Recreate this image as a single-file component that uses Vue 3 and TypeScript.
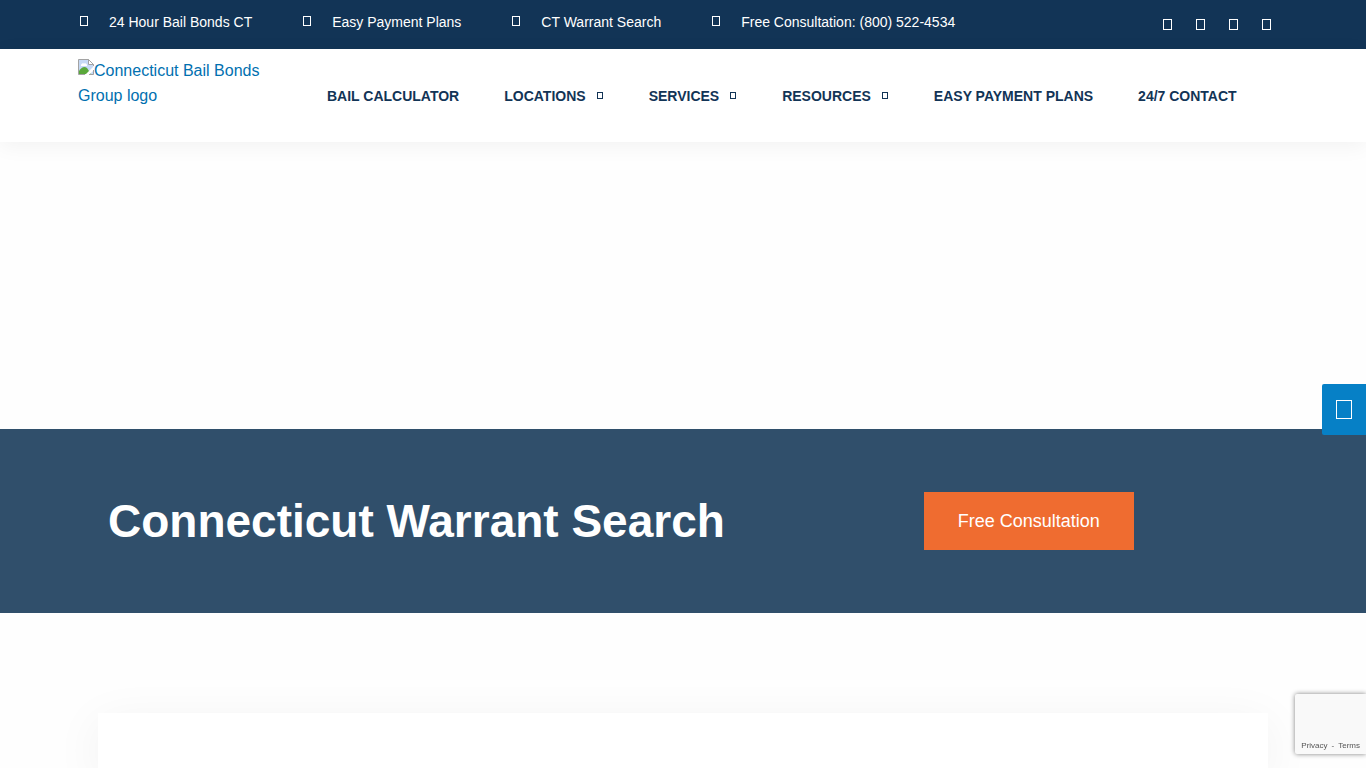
<script setup lang="ts">
interface NavItem {
  label: string
  menu: boolean
}

const contacts: string[] = [
  '24 Hour Bail Bonds CT',
  'Easy Payment Plans',
  'CT Warrant Search',
  'Free Consultation: (800) 522-4534',
]

const socials: string[] = ['Facebook', 'Twitter', 'YouTube', 'LinkedIn']

const nav: NavItem[] = [
  { label: 'BAIL CALCULATOR', menu: false },
  { label: 'LOCATIONS', menu: true },
  { label: 'SERVICES', menu: true },
  { label: 'RESOURCES', menu: true },
  { label: 'EASY PAYMENT PLANS', menu: false },
  { label: '24/7 CONTACT', menu: false },
]
</script>

<template>
  <div class="page">
    <div class="topbar">
      <ul class="contacts">
        <li v-for="item in contacts" :key="item">
          <a href="#">
            <svg class="contact-icon" width="8" height="11" viewBox="0 0 8 11" aria-hidden="true">
              <rect x="0.5" y="0.5" width="7" height="9" />
            </svg>
            <span>{{ item }}</span>
          </a>
        </li>
      </ul>
      <div class="socials">
        <a v-for="name in socials" :key="name" href="#" :aria-label="name">
          <svg width="10" height="12" viewBox="0 0 10 12" aria-hidden="true">
            <rect x="0.5" y="0.5" width="8" height="10" />
          </svg>
        </a>
      </div>
    </div>

    <header class="header">
      <a class="logo" href="#">
        <svg class="broken" width="16" height="17" viewBox="0 0 16 17" aria-hidden="true">
          <path d="M0.5 15.5V0.5H10.5L15.5 5.5V15.5Z" fill="#c6d9f5" />
          <path d="M3 6a2 2 0 0 1 3-1.500a2 2 0 0 1 3 1.500v1H3Z" fill="#fff" />
          <path d="M1 15V12Q5 6 9 9L13 15Z" fill="#5aa83a" />
          <path d="M7 16L16 7V11L11 16Z" fill="#fff" />
          <path d="M7 15.500H0.500V0.500H10.500L15.500 5.500V7M15.500 11V15.500H11" fill="none" stroke="#a3a3a3" />
          <path d="M10.500 0.500V5.500H15.500Z" fill="#fff" stroke="#a3a3a3" />
        </svg>Connecticut Bail Bonds Group logo
      </a>
      <nav class="nav" aria-label="Main">
        <a v-for="item in nav" :key="item.label" href="#">
          {{ item.label }}
          <svg v-if="item.menu" width="7" height="8" viewBox="0 0 7 8" aria-hidden="true">
            <rect x="0.5" y="0.5" width="5" height="6" />
          </svg>
        </a>
      </nav>
    </header>

    <main>
      <section class="banner">
        <h1>Connecticut Warrant Search</h1>
        <div class="action">
          <a class="cta" href="#">Free Consultation</a>
        </div>
      </section>
      <section class="card"></section>
    </main>

    <button class="side-button" type="button" aria-label="Open accessibility toolbar">
      <svg width="16" height="19" viewBox="0 0 16 19" aria-hidden="true">
        <rect x="0.5" y="0.5" width="15" height="18" />
      </svg>
    </button>

    <aside class="captcha">
      <a href="#">Privacy</a><span>-</span><a href="#">Terms</a>
    </aside>
  </div>
</template>

<style>
body {
  margin: 0;
  overflow: hidden;
  background: #fefefe;
}
</style>

<style scoped>
.page {
  height: 100vh;
  overflow: hidden;
  display: flex;
  flex-direction: column;
  font-family: "Liberation Sans", Arial, sans-serif;
}

a {
  color: inherit;
  text-decoration: none;
}

svg rect {
  fill: none;
  stroke: currentColor;
}

.topbar {
  flex: none;
  display: flex;
  justify-content: space-between;
  align-items: flex-start;
  padding: 12px 94px 12px 80px;
  background: #123456;
  color: #fff;
}

.contacts {
  display: flex;
  gap: 51px;
  margin: 0;
  padding: 0;
  list-style: none;
  font-size: 14px;
  line-height: 20px;
  white-space: nowrap;
}

.contacts a {
  display: flex;
  align-items: flex-start;
  gap: 21px;
}

.contact-icon {
  margin-top: 4px;
}

.socials {
  display: flex;
  align-items: center;
  gap: 23px;
  height: 25px;
}

.socials svg {
  display: block;
}

.header {
  flex: none;
  display: flex;
  align-items: flex-start;
  padding: 9px 78px;
  background: #fff;
  box-shadow: 0 4px 20px rgba(0, 0, 0, 0.05);
}

.logo {
  width: 204px;
  height: 75px;
  margin-right: 45px;
  color: #0170b0;
  font-size: 16px;
  line-height: 25px;
}

.broken {
  vertical-align: baseline;
}

.nav {
  display: flex;
  gap: 45px;
  padding-top: 26px;
  color: #123456;
  font-size: 14px;
  font-weight: bold;
  line-height: 24px;
  white-space: nowrap;
}

.nav a {
  display: flex;
  align-items: center;
  gap: 11px;
}

main {
  flex: 1;
  display: flex;
  flex-direction: column;
  padding-top: 287px;
}

.banner {
  flex: none;
  display: grid;
  grid-template-columns: 2fr 1fr;
  align-items: center;
  padding: 63px 108px;
  background: #304f6b;
}

.banner h1 {
  margin: 0;
  color: #fff;
  font-size: 46px;
  line-height: 56px;
}

.action {
  display: flex;
  padding-left: 49px;
}

.cta {
  padding: 17px 34px;
  background: #ef6c30;
  color: #fff;
  font-size: 18px;
  line-height: 24px;
}

.card {
  flex: 1;
  margin: 100px 98px 0;
  background: #fff;
  box-shadow: 0 10px 50px rgba(0, 0, 0, 0.06);
}

.side-button {
  position: fixed;
  top: 50%;
  right: 0;
  display: flex;
  align-items: center;
  justify-content: center;
  width: 44px;
  height: 51px;
  padding: 0;
  border: 0;
  border-radius: 2px 0 0 2px;
  background: #0680c6;
  color: #fff;
}

.captcha {
  position: fixed;
  right: 0;
  bottom: 14px;
  display: flex;
  align-items: flex-end;
  gap: 4px;
  height: 60px;
  padding: 0 6px 2px;
  box-sizing: border-box;
  border-radius: 2px 0 0 2px;
  background: #f9f9f9;
  box-shadow: 0 0 5px #808080;
  color: #555;
  font-size: 8px;
  line-height: 12px;
}
</style>
